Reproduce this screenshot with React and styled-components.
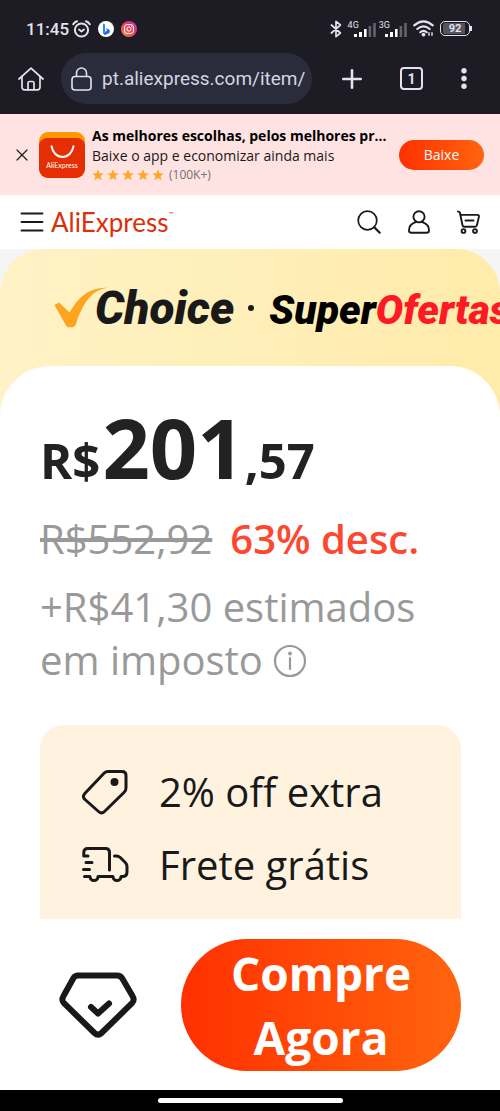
import React from 'react';
import styled, { createGlobalStyle } from 'styled-components';

const GlobalStyle = createGlobalStyle`
  *, *::before, *::after {
    box-sizing: border-box;
  }

  body {
    margin: 0;
    background: #ffffff;
    color: #191919;
    font-family: 'Open Sans', 'Noto Sans', sans-serif;
  }

  button,
  input {
    font: inherit;
    color: inherit;
  }

  svg {
    display: block;
    flex: none;
  }
`;

// --- Browser chrome ---
const Page = styled.div`
  display: flex;
  flex-direction: column;
  min-height: 100vh;
  overflow: hidden;
`;

const BrowserChrome = styled.div`
  background: #1d1b24;
  color: #e4e2ec;
  font-family: Roboto, sans-serif;
  padding-bottom: 10px;
`;

const StatusBar = styled.div`
  display: flex;
  align-items: center;
  justify-content: space-between;
  padding: 16px 28px 12px 26px;
`;

const StatusGroup = styled.div`
  display: flex;
  align-items: center;
  height: 25px;
  gap: ${({ $gap }) => $gap}px;
`;

const Clock = styled.time`
  font-size: 17px;
  font-weight: 500;
  line-height: 24px;
`;

const ClockGroup = styled.div`
  display: flex;
  align-items: center;
  gap: 3px;
`;

const Networks = styled.div`
  display: flex;
  gap: 3px;
`;

const Network = styled.div`
  display: flex;
  align-items: flex-end;
  height: 16px;
`;

const NetworkLabel = styled.span`
  align-self: flex-start;
  font-size: 9px;
  line-height: 9px;
  margin-right: -5px;
`;

const Battery = styled.div`
  display: flex;
  align-items: center;
`;

const BatteryBody = styled.span`
  border: 1px solid #e4e2ec;
  border-radius: 5px;
  padding: 1px 2px;
  width: 30px;
  height: 15px;
`;

const BatteryLevel = styled.span`
  display: block;
  border-radius: 2px;
  background: linear-gradient(to right, #55535c 92%, transparent 92%);
  font-size: 11px;
  font-weight: 700;
  line-height: 11px;
  text-align: center;
`;

const BatteryTip = styled.span`
  width: 2px;
  height: 5px;
  background: #e4e2ec;
`;

const Toolbar = styled.div`
  display: flex;
  align-items: center;
  padding-left: 18px;
  padding-right: 33px;
`;

const IconButton = styled.button`
  display: flex;
  align-items: center;
  justify-content: center;
  border: 0;
  padding: 0;
  background: none;
`;

const AddressBar = styled.label`
  display: flex;
  align-items: center;
  flex: 1;
  min-width: 0;
  height: 51px;
  margin: 0 30px 0 17px;
  padding: 0 4px 0 10px;
  gap: 10px;
  border-radius: 26px;
  background: #2b2c3b;
`;

const AddressInput = styled.input`
  flex: 1;
  min-width: 0;
  border: 0;
  padding: 0;
  outline: 0;
  background: none;
  color: #d6d4e2;
  font-size: 19px;
`;

const ToolbarActions = styled.div`
  display: flex;
  align-items: center;
  gap: 38px;
`;

const TabCount = styled.button`
  width: 23px;
  height: 23px;
  border: 2px solid #e4e2ec;
  border-radius: 4px;
  padding: 0;
  background: none;
  font-size: 14px;
  font-weight: 700;
  line-height: 18px;
`;

// --- App banner ---
const AppBanner = styled.section`
  display: flex;
  align-items: center;
  height: 81px;
  padding: 0 16px;
  background: #ffe3e3;
`;

const AppIcon = styled.div`
  display: flex;
  flex-direction: column;
  align-items: center;
  width: 46px;
  height: 46px;
  margin: 0 7px 0 11px;
  border-radius: 9px;
  background: #ff9900;
  overflow: hidden;
`;

const AppIconFace = styled.div`
  display: flex;
  flex-direction: column;
  align-items: center;
  width: 46px;
  height: 40px;
  margin-top: 6px;
  padding-top: 7px;
  border-radius: 8px;
  background: #e62e04;
  color: #ffffff;
  font-family: Lato, sans-serif;
  font-size: 7px;
  line-height: 12px;
`;

const BannerText = styled.div`
  flex: 1;
  min-width: 0;
  color: #191919;
  font-size: 14px;
  line-height: 20px;
`;

const BannerTitle = styled.strong`
  display: block;
  white-space: nowrap;
  color: #000000;
`;

const Rating = styled.div`
  display: flex;
  align-items: center;
  color: #757070;
  font-size: 12px;
  line-height: 17px;
`;

const Stars = styled.span`
  display: flex;
  gap: 3px;
  margin-right: 5px;
`;

const DownloadButton = styled.button`
  width: 85px;
  height: 30px;
  margin-left: 18px;
  border: 0;
  border-radius: 15px;
  padding: 0;
  background: linear-gradient(to right, #ff3000, #ff640e);
  color: #ffffff;
  font-size: 14px;
`;

// --- Site header ---
const SiteHeader = styled.header`
  display: flex;
  align-items: center;
  height: 54px;
  padding: 0 20px;
`;

const Logo = styled.a`
  flex: 1;
  display: flex;
  margin-left: 7px;
  color: #dc2f0c;
  font-family: Lato, sans-serif;
  font-size: 26px;
  line-height: 32px;
  text-decoration: none;
`;

const Trademark = styled.sup`
  font-size: 6px;
  line-height: 16px;
`;

const HeaderActions = styled.nav`
  display: flex;
  align-items: center;
  gap: 27px;
`;

// --- Product ---
const Product = styled.main`
  flex: 1;
  background: linear-gradient(#f5f5f5 120px, #ffffff 120px);
`;

const ChoiceBanner = styled.section`
  border-radius: 44px 44px 0 0;
  background: linear-gradient(to right, #fff2c6, #ffebaa);
`;

const ChoiceTitle = styled.h2`
  display: flex;
  align-items: center;
  height: 117px;
  margin: 0;
  padding-left: 54px;
  overflow: hidden;
  white-space: nowrap;
  font-family: Roboto, sans-serif;
  font-style: italic;
  font-weight: 900;
  color: #191919;
`;

const ChoiceWord = styled.span`
  margin-left: -13px;
  font-size: 46px;
`;

const Dot = styled.span`
  flex: none;
  width: 6px;
  height: 6px;
  margin: 0 15px 0 14px;
  border-radius: 50%;
  background: #191919;
`;

const SuperWord = styled.span`
  padding-top: 4px;
  color: #000000;
  font-size: 41px;
`;

const Highlight = styled.span`
  color: #fd1a25;
`;

const Details = styled.section`
  padding: 33px 39px 0 40px;
  border-radius: 50px 50px 0 0;
  background: #ffffff;
`;

const Price = styled.div`
  display: flex;
  align-items: baseline;
  color: #222222;
  font-size: 49px;
  font-weight: 700;
  line-height: 96px;
`;

const PriceMain = styled.span`
  margin-left: 2px;
  font-size: 83px;
`;

const Discount = styled.div`
  display: flex;
  gap: 18px;
  margin-top: 5px;
  font-size: 40px;
  line-height: 52px;
`;

const OldPrice = styled.del`
  color: #999999;
`;

const Percent = styled.span`
  color: #fd4830;
  font-weight: 600;
`;

const Tax = styled.p`
  margin: 15px 0 0;
  color: #999999;
  font-size: 40px;
  line-height: 53px;

  svg {
    display: inline-block;
    vertical-align: -3px;
  }
`;

const Benefits = styled.ul`
  display: flex;
  flex-direction: column;
  gap: 20px;
  margin: 39px 0 0;
  padding: 40px 40px 28px;
  border-radius: 24px 24px 0 0;
  background: #fff3df;
  list-style: none;
`;

const Benefit = styled.li`
  display: flex;
  align-items: center;
  gap: 27px;
  font-size: 40px;
  line-height: 53px;
`;

// --- Buy bar ---
const BuyBar = styled.footer`
  display: flex;
  align-items: center;
  gap: 44px;
  padding: 20px 39px 19px 59px;
  background: #ffffff;
`;

const BuyButton = styled.button`
  flex: 1;
  min-width: 0;
  border: 0;
  border-radius: 66px;
  padding: 2px 40px;
  background: linear-gradient(to right, #ff3000, #ff640e);
  color: #ffffff;
  font-size: 46px;
  font-weight: 700;
  line-height: 64px;
`;

const GestureBar = styled.div`
  display: flex;
  justify-content: center;
  padding: 8px 0;
  background: #000000;
`;

const GestureHandle = styled.span`
  width: 37%;
  height: 5px;
  border-radius: 3px;
  background: #ffffff;
`;

// --- Icons ---
const Svg = ({ w, h, sw = 2, children }) => (
  <svg
    width={w}
    height={h}
    viewBox={`0 0 ${w} ${h}`}
    fill="none"
    stroke="currentColor"
    strokeWidth={sw}
    strokeLinecap="round"
    strokeLinejoin="round"
    aria-hidden="true"
  >
    {children}
  </svg>
);

const AlarmIcon = () => (
  <Svg w={19} h={18}>
    <circle cx="9.5" cy="10" r="6.6" />
    <path d="M7 9.5l2.5 2 2.5-2" strokeWidth="1.8" />
    <path d="M1.2 4.2Q2.6 2 5 1.2M17.8 4.2Q16.4 2 14 1.2" />
  </Svg>
);

const BingIcon = () => (
  <svg width="16" height="16" viewBox="0 0 16 16" aria-hidden="true">
    <circle cx="8" cy="8" r="8" fill="#ffffff" />
    <path d="M5 2.6l2 .8v7.2l-2 2z" fill="#1b8df0" />
    <path d="M5 12.4l2.4-1.8 1.6-.6-1-2.8 3 1.2q1.3.8.8 2.5-.4 1-1.5 1.6L7 13.9z" fill="#2468dd" />
  </svg>
);

const InstagramIcon = () => (
  <svg width="16" height="16" viewBox="0 0 16 16" aria-hidden="true">
    <defs>
      <linearGradient id="insta" x1="0" y1="1" x2="1" y2="0">
        <stop offset="0" stopColor="#f59a45" />
        <stop offset="0.5" stopColor="#e63a5c" />
        <stop offset="1" stopColor="#b936a8" />
      </linearGradient>
    </defs>
    <circle cx="8" cy="8" r="8" fill="url(#insta)" />
    <rect x="3.6" y="3.6" width="8.8" height="8.8" rx="2.4" fill="none" stroke="#fff" strokeWidth="1" />
    <circle cx="8" cy="8" r="2.1" fill="none" stroke="#fff" strokeWidth="1" />
    <circle cx="10.6" cy="5.4" r=".6" fill="#fff" />
  </svg>
);

const BluetoothIcon = () => (
  <Svg w={12} h={18} sw={1.7}>
    <path d="M1.4 5l9 8L6 16.7V1.3L10.4 5l-9 8" />
  </Svg>
);

const SignalIcon = () => (
  <svg width="22" height="14" viewBox="0 0 22 14" aria-hidden="true">
    <path d="M0 11h3v3H0zM5 9h3v5H5zM10 6h2.6v8H10z" fill="#ffffff" />
    <path d="M14.6 3h2.6v11h-2.6zM19.2 0h2.6v14h-2.6z" fill="#64626b" />
  </svg>
);

const WifiIcon = () => (
  <Svg w={21} h={17} sw={2.1}>
    <path d="M1.2 5.4Q10.5-2.6 19.8 5.4M4.3 9Q10.5 3.8 16.7 9M7.3 12.2Q10.5 9.4 13.7 12.2" />
    <circle cx="10.5" cy="14.6" r=".9" fill="currentColor" />
    <path d="M16 12.8v2.4M19 12.8v2.4" strokeWidth="1.4" />
  </Svg>
);

const HomeIcon = () => (
  <Svg w={26} h={24} sw={1.7}>
    <path d="M1 12L13 1.2 25 12M4 9.5V20q0 2.8 2.8 2.8h12.4q2.8 0 2.8-2.8V9.5" />
    <path d="M10 22.5V16q0-1.5 1.5-1.5h3Q16 14.5 16 16v6.5" />
  </Svg>
);

const LockIcon = () => (
  <Svg w={21} h={24} sw={1.6}>
    <rect x="1" y="9.5" width="19" height="13.5" rx="3" />
    <path d="M5.5 9.3V6a5 5 0 0110 0v3.3" />
  </Svg>
);

const PlusIcon = () => (
  <Svg w={20} h={20} sw={2.6}>
    <path d="M10 1.3v17.4M1.3 10h17.4" />
  </Svg>
);

const DotsIcon = () => (
  <svg width="6" height="21" viewBox="0 0 6 21" fill="currentColor" aria-hidden="true">
    <circle cx="3" cy="2.8" r="2.7" />
    <circle cx="3" cy="10.5" r="2.7" />
    <circle cx="3" cy="18.2" r="2.7" />
  </svg>
);

const CloseIcon = () => (
  <Svg w={12} h={12} sw={1.2}>
    <path d="M1 1l10 10M11 1L1 11" />
  </Svg>
);

const StarIcon = () => (
  <svg width="12" height="12" viewBox="0 0 12 12" fill="#ffa726" aria-hidden="true">
    <path d="M6 .2l1.6 4 4.2.2-3.3 2.6 1.2 4.2L6 8.9l-3.7 2.3L3.500 7 .2 4.400l4.200-.2z" />
  </svg>
);

const SmileIcon = () => (
  <Svg w={25} h={14} sw={2}>
    <path d="M1.5 1.2C2.5 7 6.5 12 12.5 12S22.5 7 23.5 1.2" />
  </Svg>
);

const MenuIcon = () => (
  <Svg w={24} h={20} sw={1.8}>
    <path d="M1.5 1.5h21M1.5 10h21M1.5 18.5h21" />
  </Svg>
);

const SearchIcon = () => (
  <Svg w={24} h={24} sw={1.7}>
    <circle cx="10.5" cy="10.5" r="9.3" />
    <path d="M17.2 17.2l5.5 5.5" strokeWidth="2.2" />
  </Svg>
);

const UserIcon = () => (
  <Svg w={22} h={24} sw={1.9}>
    <circle cx="11" cy="6.8" r="5.6" />
    <path d="M7.7 12.2C3.5 13.5 1 17 1 20.5 1 22 2 22.8 3.5 22.8h15c1.5 0 2.5-.8 2.5-2.3 0-3.5-2.5-7-6.7-8.3" />
  </Svg>
);

const CartIcon = () => (
  <Svg w={23} h={24} sw={1.9}>
    <path d="M1 1.5l1.8.8L5.5 15.2q.3 1.5 1.8 1.5H18q1.5 0 1.9-1.4l2-8.4q.4-2-1.6-2H3.5M8.5 10.5h8" />
    <circle cx="6.5" cy="21" r="1.9" />
    <circle cx="18" cy="21" r="1.9" />
  </Svg>
);

const CheckSwoosh = () => (
  <svg width="54" height="41" viewBox="0 0 54 41" fill="#ffa41f" aria-hidden="true">
    <path d="M.5 18L5 15.600 15.500 25.500C25 9 36 0 53.500.8 39 3 30 13 22 37q-1.200 3.200-3 3.200h-5q-1.200 0-2-1.600z" />
  </svg>
);

const InfoIcon = () => (
  <Svg w={34} h={34} sw={2.2}>
    <circle cx="17" cy="17" r="15" />
    <path d="M17 14v11" />
    <circle cx="17" cy="9.5" r=".8" fill="currentColor" />
  </Svg>
);

const TagIcon = () => (
  <Svg w={52} h={48} sw={3}>
    <path d="M28 3.5H42q4 0 4 4V20q0 2.5-1.8 4.3L24.5 43.5q-3 2.8-6 0L5 31.5q-3-3-.2-6L24 5.2q1.7-1.7 4-1.7z" />
    <circle cx="34.5" cy="14" r="2.5" fill="currentColor" />
  </Svg>
);

const TruckIcon = () => (
  <Svg w={52} h={48} sw={3}>
    <path d="M8 15H3.8V11.5q0-4 4-4H25.5q4 0 4 4V29" />
    <path d="M34.5 15h2q2 0 3.5 1.3l5.3 5.2q1.7 1.8 1.7 4V31q0 4.5-4.5 4.5h-1.5a4 4 0 01-8 0H18a4 4 0 01-8 0H4.5M6 21.5h6M3.5 28.5h6" />
  </Svg>
);

const StoreIcon = () => (
  <Svg w={78} h={66} sw={6}>
    <path d="M19 3.5H58q3.5 0 5.300 3L73.500 24q2.500 4-.5 7.200L42.500 61q-3.500 3.200-7 0L5 31.200Q2 28 4.500 24L14.200 6.500q1.600-3 4.800-3z" />
    <path d="M32 35l7 6.5L50 31.5" />
  </Svg>
);

const benefits = [
  { label: '2% off extra', Icon: TagIcon },
  { label: 'Frete grátis', Icon: TruckIcon },
];

function BrowserTop() {
  return (
    <BrowserChrome>
      <StatusBar>
        <StatusGroup $gap={7}>
          <ClockGroup>
            <Clock>11:45</Clock>
            <AlarmIcon />
          </ClockGroup>
          <BingIcon />
          <InstagramIcon />
        </StatusGroup>
        <StatusGroup $gap={6}>
          <BluetoothIcon />
          <Networks>
            {['4G', '3G'].map((network) => (
              <Network key={network}>
                <NetworkLabel>{network}</NetworkLabel>
                <SignalIcon />
              </Network>
            ))}
          </Networks>
          <WifiIcon />
          <Battery>
            <BatteryBody>
              <BatteryLevel>92</BatteryLevel>
            </BatteryBody>
            <BatteryTip />
          </Battery>
        </StatusGroup>
      </StatusBar>
      <Toolbar>
        <IconButton aria-label="Início"><HomeIcon /></IconButton>
        <AddressBar>
          <LockIcon />
          <AddressInput aria-label="Endereço" defaultValue="pt.aliexpress.com/item/" />
        </AddressBar>
        <ToolbarActions>
          <IconButton aria-label="Nova aba"><PlusIcon /></IconButton>
          <TabCount>1</TabCount>
          <IconButton aria-label="Mais opções"><DotsIcon /></IconButton>
        </ToolbarActions>
      </Toolbar>
    </BrowserChrome>
  );
}

function DownloadBanner() {
  return (
    <AppBanner>
      <IconButton aria-label="Fechar"><CloseIcon /></IconButton>
      <AppIcon>
        <AppIconFace>
          <SmileIcon />
          AliExpress
        </AppIconFace>
      </AppIcon>
      <BannerText>
        <BannerTitle>As melhores escolhas, pelos melhores pr...</BannerTitle>
        <div>Baixe o app e economizar ainda mais</div>
        <Rating>
          <Stars>
            {[1, 2, 3, 4, 5].map((n) => <StarIcon key={n} />)}
          </Stars>
          (100K+)
        </Rating>
      </BannerText>
      <DownloadButton>Baixe</DownloadButton>
    </AppBanner>
  );
}

function App() {
  return (
    <Page>
      <GlobalStyle />
      <BrowserTop />
      <DownloadBanner />

      <SiteHeader>
        <IconButton aria-label="Menu"><MenuIcon /></IconButton>
        <Logo href="#">AliExpress<Trademark>™</Trademark></Logo>
        <HeaderActions>
          <IconButton aria-label="Buscar"><SearchIcon /></IconButton>
          <IconButton aria-label="Conta"><UserIcon /></IconButton>
          <IconButton aria-label="Carrinho"><CartIcon /></IconButton>
        </HeaderActions>
      </SiteHeader>

      <Product>
        <ChoiceBanner>
          <ChoiceTitle>
            <CheckSwoosh />
            <ChoiceWord>Choice</ChoiceWord>
            <Dot />
            <SuperWord>Super<Highlight>Ofertas</Highlight></SuperWord>
          </ChoiceTitle>

          <Details>
            <Price>
              R$<PriceMain>201</PriceMain>,57
            </Price>
            <Discount>
              <OldPrice>R$552,92</OldPrice>
              <Percent>63% desc.</Percent>
            </Discount>
            <Tax>
              +R$41,30 estimados em imposto <InfoIcon />
            </Tax>
            <Benefits>
              {benefits.map(({ label, Icon }) => (
                <Benefit key={label}>
                  <Icon />
                  {label}
                </Benefit>
              ))}
            </Benefits>
          </Details>
        </ChoiceBanner>
      </Product>

      <BuyBar>
        <IconButton aria-label="Loja"><StoreIcon /></IconButton>
        <BuyButton>Compre Agora</BuyButton>
      </BuyBar>
      <GestureBar><GestureHandle /></GestureBar>
    </Page>
  );
}

export default App;
